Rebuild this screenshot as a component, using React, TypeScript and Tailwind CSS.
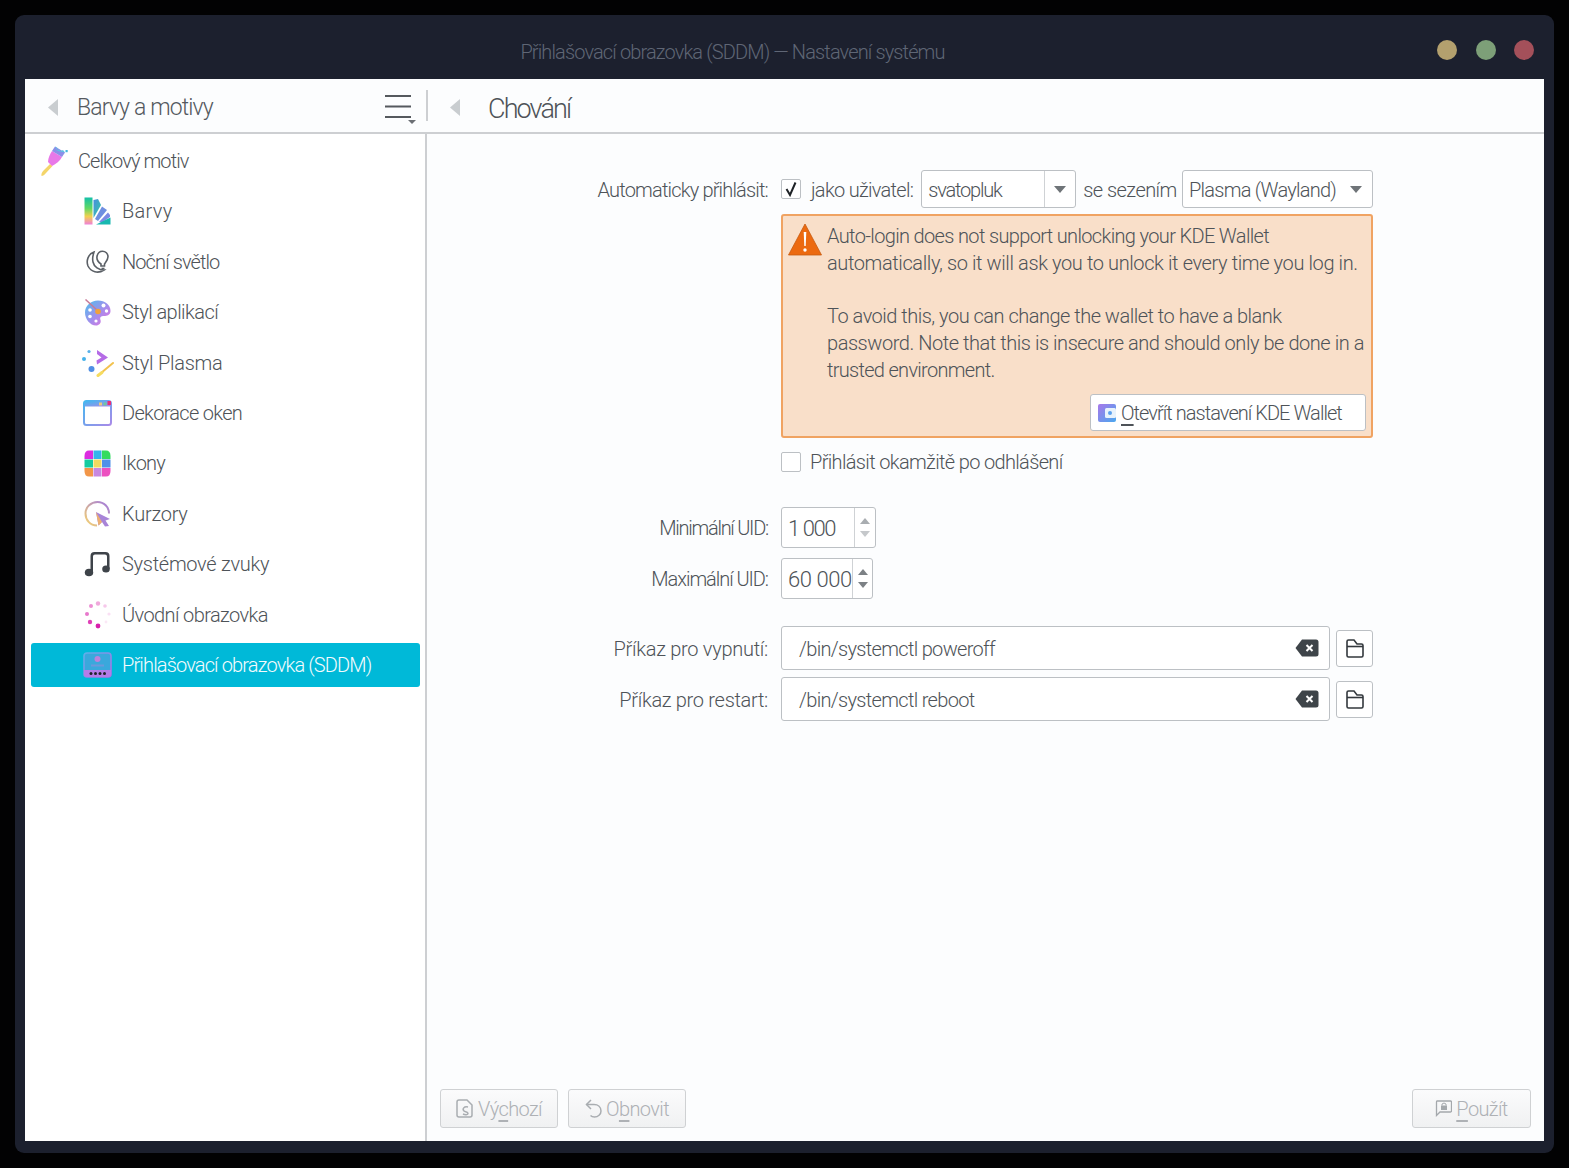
import React from 'react';

const font = "font-['Roboto',sans-serif] font-light";

const BrushIcon = () => (
    <svg width="28" height="32" viewBox="0 0 28 32">
        <path d="M1.5 31 C1 29 2 27 4 25 L10 19 L12.5 21 L6 28 C4.5 30 3 31 1.5 31 Z" fill="#f4d56a" />
        <path d="M8 17 C8 13 10 9 12 6 L22 12 C20 16 16 19 12 21 Z" fill="#e878e8" />
        <path d="M12 6 L15 1.5 L25 7.5 L22 12 Z" fill="#8c8fe8" />
        <path d="M15 1.5 L17.5 3 L16 5.5 L19 4.5 L21 6 L23 5 L25 7.5 L18 6 Z" fill="#5cc4e4" />
        <rect x="25.5" y="5" width="2.2" height="2.2" fill="#45b8de" />
    </svg>
);

const FanIcon = () => (
    <svg width="27" height="28" viewBox="0 0 27 28">
        <defs>
            <linearGradient id="fanA" x1="0" y1="0" x2="0" y2="1">
                <stop offset="0" stopColor="#14c0a8" />
                <stop offset="0.4" stopColor="#62d864" />
                <stop offset="0.7" stopColor="#f2d050" />
                <stop offset="1" stopColor="#f080d8" />
            </linearGradient>
            <linearGradient id="fanB" x1="0" y1="0" x2="1" y2="1">
                <stop offset="0" stopColor="#4a8ce0" />
                <stop offset="1" stopColor="#30d0a0" />
            </linearGradient>
        </defs>
        <rect x="0.5" y="0.5" width="8" height="27" fill="url(#fanA)" />
        <path d="M9.5 3 L14 2 L17 8 L9.5 21 Z" fill="url(#fanB)" />
        <path d="M11 22 L18 9.5 L23 13 L14 24 Z" fill="#6f8fe0" />
        <path d="M15 25 L24 15.5 L26 18 L26 20 L18 25.5 Z" fill="#7c8ae4" />
        <path d="M12 27.5 L26.5 20.5 V27.5 Z" fill="#18b8b0" />
    </svg>
);

const NightIcon = () => (
    <svg width="26" height="26" viewBox="0 0 26 26" fill="none" stroke="#5b6066" strokeWidth="1.6">
        <path d="M9 3 C3 5 1 12 3 17 C6 23 13 25 19 21 C14 21 9 18 8 13 C7 9 8 6 9 3 Z" />
        <path d="M16 17 V15 C13 13 11.5 10.5 12 7.5 C12.6 4 15 2.2 17.5 2.2 C20.5 2.2 23 4.6 23 7.8 C23 10.8 21 13 19.5 15 V17 Z" />
        <path d="M16.5 19.5 H19.5" />
    </svg>
);

const PaletteIcon = () => (
    <svg width="27" height="27" viewBox="0 0 27 27">
        <defs>
            <linearGradient id="palA" x1="0" y1="0" x2="1" y2="1">
                <stop offset="0" stopColor="#4cc0ee" />
                <stop offset="0.55" stopColor="#a68cec" />
                <stop offset="1" stopColor="#ee70dc" />
            </linearGradient>
        </defs>
        <path d="M14 1.5 C21 1.5 26.5 6 26.5 12 C26.5 16 23 17 20 17 C17 17 15.5 18 16.5 21 C17.5 24 15 26.5 12 26.5 C6 26.5 1 20 1 13.5 C1 6.5 7 1.5 14 1.5 Z" fill="url(#palA)" />
        <circle cx="19.5" cy="6.5" r="2" fill="#fff" />
        <circle cx="22.5" cy="12" r="1.7" fill="#fff" />
        <circle cx="6" cy="11" r="1.8" fill="#fff" />
        <circle cx="6" cy="17.5" r="1.8" fill="#fff" />
        <circle cx="12" cy="22" r="1.6" fill="#fff" />
        <path d="M1.5 0.5 L14 12" stroke="#c87a98" strokeWidth="1.5" />
        <circle cx="14" cy="12.5" r="2.8" fill="#f0a23c" />
    </svg>
);

const PlasmaIcon = () => (
    <svg width="32" height="28" viewBox="0 0 32 28">
        <path d="M15 1 L26 8.5 L15 15.5 L14.5 11.5 L19.5 8.5 L15 5 Z" fill="#b56ce6" />
        <circle cx="7" cy="2.5" r="1.6" fill="#58b0e8" />
        <circle cx="2" cy="10" r="2" fill="#45b2ea" />
        <circle cx="9.5" cy="20" r="3" fill="#4f8fe4" />
        <path d="M19 24 L31 14" stroke="#f2c24e" strokeWidth="2" strokeLinecap="round" />
        <path d="M16 26.5 L20 23.5" stroke="#f6dc60" strokeWidth="3" strokeLinecap="round" />
    </svg>
);

const WindowIcon = () => (
    <svg width="29" height="26" viewBox="0 0 29 26" fill="none">
        <defs>
            <linearGradient id="winA" x1="0" y1="0" x2="1" y2="1">
                <stop offset="0" stopColor="#44b8f0" />
                <stop offset="1" stopColor="#a88ae8" />
            </linearGradient>
        </defs>
        <rect x="1" y="1" width="27" height="24" rx="2.5" stroke="url(#winA)" strokeWidth="2" fill="#fff" />
        <path d="M1.5 1.5 H27.5 V6.5 H1.5 Z" fill="url(#winA)" />
        <rect x="16" y="2.5" width="3" height="3" fill="#eec880" />
        <rect x="20.5" y="2.5" width="3" height="3" fill="#70c8a0" />
        <rect x="24.5" y="1" width="3.5" height="4" fill="#e8307a" />
    </svg>
);

const GridIcon = () => (
    <svg width="27" height="27" viewBox="0 0 27 27">
        <path d="M9 0.5 H5 Q0.5 0.5 0.5 6 V9 H9 Z" fill="#dc2ce0" />
        <rect x="9.5" y="0.5" width="8" height="8.5" fill="#35b4ec" />
        <path d="M18 0.5 H22 Q26.5 0.5 26.5 6 V9 H18 Z" fill="#34dc60" />
        <rect x="0.5" y="9.5" width="8.5" height="8" fill="#14cca0" />
        <rect x="9.5" y="9.5" width="8" height="8" fill="#f0da60" />
        <rect x="18" y="9.5" width="8.5" height="8" fill="#4f90e8" />
        <path d="M0.5 18 H9 V26.5 H5 Q0.5 26.5 0.5 21 Z" fill="#f29648" />
        <rect x="9.5" y="18" width="8" height="8.5" fill="#c888e0" />
        <path d="M18 18 H26.5 V21 Q26.5 26.5 22 26.5 H18 Z" fill="#ec50c0" />
    </svg>
);

const CursorIcon = () => (
    <svg width="27" height="27" viewBox="0 0 27 27" fill="none">
        <defs>
            <linearGradient id="curA" x1="0" y1="1" x2="1" y2="0">
                <stop offset="0" stopColor="#f6d470" />
                <stop offset="1" stopColor="#a078e0" />
            </linearGradient>
        </defs>
        <path d="M13 25.5 C6 25.5 1.5 20 1.5 13.5 C1.5 7 7 2 13.5 2 C20 2 25 7 25 13.5" stroke="url(#curA)" strokeWidth="2" />
        <path d="M12 12 L26 19 L21.5 20.5 L25 26 L21 26.5 L18 22 L14.5 25.5 Z" fill="#a884d8" />
        <path d="M12 12 L18 22 L14.5 25.5 Z" fill="#eeb070" />
    </svg>
);

const MusicIcon = () => (
    <svg width="27" height="26" viewBox="0 0 27 26" fill="#3e4349">
        <path d="M6.5 21 V5 Q6.5 1 10.5 1 H21.5 Q25.5 1 25.5 5 V18 H23 V5.5 Q23 3.5 21 3.5 H11 Q9 3.5 9 5.5 V21 Z" />
        <ellipse cx="5" cy="21.5" rx="4.2" ry="3.8" />
        <ellipse cx="22" cy="18" rx="3.8" ry="3.5" />
    </svg>
);

const SplashIcon = () => (
    <svg width="28" height="28" viewBox="0 0 28 28">
        <circle cx="14" cy="2.5" r="2.2" fill="#f0a8dc" />
        <circle cx="7" cy="5" r="2" fill="#ec90d4" />
        <circle cx="21" cy="5" r="1.8" fill="#f6c8ea" />
        <circle cx="3" cy="13" r="2" fill="#e878cc" />
        <circle cx="25" cy="13" r="1.6" fill="#fae0f4" />
        <circle cx="6" cy="21" r="2.2" fill="#e040b8" />
        <circle cx="22" cy="21" r="1.4" fill="#fbe8f6" />
        <circle cx="14" cy="25" r="2.4" fill="#d820ac" />
    </svg>
);

const LoginIcon = () => (
    <svg width="29" height="26" viewBox="0 0 29 26">
        <defs>
            <linearGradient id="logA" x1="0" y1="0" x2="1" y2="1">
                <stop offset="0" stopColor="#5eb0ea" />
                <stop offset="1" stopColor="#b06ce6" />
            </linearGradient>
        </defs>
        <rect x="1" y="1" width="27" height="24" rx="3" fill="#3aa8dc" stroke="url(#logA)" strokeWidth="1.6" />
        <path d="M1 18 H28 V22 Q28 25 25 25 H4 Q1 25 1 22 Z" fill="#b47ce8" />
        <circle cx="14.5" cy="7" r="3" fill="#bc82dc" />
        <path d="M8 12.5 H21 V14.5 H8 Z" fill="#6c98dc" />
        <circle cx="8" cy="21.5" r="1.5" fill="#20232b" />
        <circle cx="12.5" cy="21.5" r="1.5" fill="#20232b" />
        <circle cx="17" cy="21.5" r="1.5" fill="#20232b" />
        <circle cx="21.5" cy="21.5" r="1.5" fill="#20232b" />
    </svg>
);

const BackArrow = () => (
    <svg width="10" height="17" viewBox="0 0 10 17">
        <path d="M10 0 V17 L0 8.5 Z" fill="#c9cdd0" />
    </svg>
);

const MenuIcon = () => (
    <svg width="32" height="30" viewBox="0 0 32 30">
        <path d="M0 1 H26 M0 11.5 H26 M0 22 H26" stroke="#55595e" strokeWidth="2" />
        <path d="M23 25 H31 L27 29 Z" fill="#6b6f74" />
    </svg>
);

const Caret = () => (
    <svg width="12" height="7" viewBox="0 0 12 7" className="shrink-0">
        <path d="M0 0 H12 L6 7 Z" fill="#6f7478" />
    </svg>
);

const ClearIcon = () => (
    <svg width="24" height="18" viewBox="0 0 24 18">
        <path d="M7 0.5 H21 Q23.5 0.5 23.5 3 V15 Q23.5 17.5 21 17.5 H7 L0.5 9 Z" fill="#3e4449" />
        <path d="M11.5 6 L17.5 12 M17.5 6 L11.5 12" stroke="#fff" strokeWidth="2" />
    </svg>
);

const FolderIcon = () => (
    <svg width="18" height="19" viewBox="0 0 18 19" fill="none" stroke="#33383d" strokeWidth="1.6">
        <path d="M2.5 18 H15.5 Q17 18 17 16.5 V6.5 Q17 5 15.5 5 H11 L8 1 H2.5 Q1 1 1 2.5 V16.5 Q1 18 2.5 18 Z" />
        <path d="M1 7.5 H17" />
    </svg>
);

const WarningIcon = () => (
    <svg width="34" height="33" viewBox="0 0 34 33">
        <path d="M17 1 L33.5 32 H0.5 Z" fill="#ec6a10" stroke="#c85a10" strokeWidth="0.8" strokeLinejoin="round" />
        <path d="M15.7 9 H18.3 L17.7 23 H16.3 Z" fill="#fff" />
        <circle cx="17" cy="27" r="1.7" fill="#fff" />
    </svg>
);

const WalletIcon = () => (
    <svg width="19" height="18" viewBox="0 0 19 18">
        <defs>
            <linearGradient id="walA" x1="0" y1="0" x2="1" y2="1">
                <stop offset="0" stopColor="#a878ea" />
                <stop offset="1" stopColor="#4aa8ee" />
            </linearGradient>
        </defs>
        <rect x="0" y="0" width="18" height="18" rx="2" fill="url(#walA)" />
        <rect x="7" y="4" width="11" height="10" rx="1.5" fill="#e8f2fc" />
        <circle cx="12" cy="9" r="2" fill="#5aa0ec" />
    </svg>
);

const DefaultsIcon = () => (
    <svg width="18" height="19" viewBox="0 0 18 19" fill="none" stroke="#a9adb1" strokeWidth="1.5">
        <path d="M3 1 H11 L16 6 V16 Q16 18 14 18 H3 Q1 18 1 16 V3 Q1 1 3 1 Z" />
        <path d="M12 8 C8 7 6 10 8 12 C9 13 12 12.5 12 14.5 C12 16 9 16 7 15" />
    </svg>
);

const UndoIcon = () => (
    <svg width="17" height="19" viewBox="0 0 17 19" fill="none" stroke="#a9adb1" strokeWidth="1.5">
        <path d="M6 1 L1.5 5.5 L6 10" />
        <path d="M1.5 5.5 H9 C13 5.5 16 8 16 12 C16 15.5 13 18 9.5 18 C8 18 6.5 17.5 5.5 16.5" />
    </svg>
);

const ApplyIcon = () => (
    <svg width="17" height="17" viewBox="0 0 17 17">
        <path d="M2 1 H15.5 Q16.5 1 16.5 2 V11 Q16.5 12 15.5 12 H5 L1.5 15.5 V2 Q1.5 1 2 1 Z" fill="none" stroke="#a4a8ac" strokeWidth="1.3" />
        <rect x="6" y="5.5" width="6" height="4.5" fill="#a4a8ac" />
        <path d="M7 5.5 V4 Q9 2 11 4 V5.5" fill="none" stroke="#a4a8ac" strokeWidth="1" />
    </svg>
);

const sidebarItems = [
    { label: 'Barvy', icon: <FanIcon />, tracking: 'tracking-[0.3px]' },
    { label: 'Noční světlo', icon: <NightIcon />, tracking: 'tracking-[-0.9px]' },
    { label: 'Styl aplikací', icon: <PaletteIcon />, tracking: 'tracking-[-0.55px]' },
    { label: 'Styl Plasma', icon: <PlasmaIcon />, tracking: 'tracking-[-0.25px]' },
    { label: 'Dekorace oken', icon: <WindowIcon />, tracking: 'tracking-[-0.7px]' },
    { label: 'Ikony', icon: <GridIcon />, tracking: 'tracking-[-0.75px]' },
    { label: 'Kurzory', icon: <CursorIcon />, tracking: 'tracking-[-0.25px]' },
    { label: 'Systémové zvuky', icon: <MusicIcon />, tracking: 'tracking-[-0.28px]' },
    { label: 'Úvodní obrazovka', icon: <SplashIcon />, tracking: 'tracking-[-0.6px]' },
];

const textClass = 'text-[20px] text-[#4e5358] leading-none whitespace-nowrap';
const labelClass = `${textClass} flex items-center justify-end pt-[1px]`;

const Spinner = ({ value, width, tracking, dim }: { value: string; width: string; tracking: string; dim?: boolean }) => (
    <div className={`flex h-[41px] ${width} items-stretch rounded-[3px] border border-[#bcc0c4] bg-white`}>
        <div className={`flex flex-1 items-center pl-[6px] pt-[3px] text-[22px] ${tracking} text-[#4e5358] leading-none whitespace-nowrap`}>{value}</div>
        <div className="flex w-[21px] shrink-0 flex-col items-center justify-center gap-[7px] border-l border-[#cfd2d5]">
            <svg width="10" height="6" viewBox="0 0 10 6">
                <path d="M0 6 H10 L5 0 Z" fill={dim ? '#a9adb1' : '#7c8185'} />
            </svg>
            <svg width="10" height="6" viewBox="0 0 10 6">
                <path d="M0 0 H10 L5 6 Z" fill={dim ? '#c5c8cb' : '#7c8185'} />
            </svg>
        </div>
    </div>
);

const CommandField = ({ value }: { value: string }) => (
    <div className="flex items-center gap-[6px]">
        <div className="flex h-[44px] w-[549px] items-center justify-between rounded-[3px] border border-[#bcc0c4] bg-white pl-[17px] pr-[10px]">
            <span className={`${textClass} pt-[1px] tracking-[-0.68px]`}>{value}</span>
            <ClearIcon />
        </div>
        <div className="flex h-[37px] w-[37px] items-center justify-center rounded-[3px] border border-[#bcc0c4] bg-white">
            <FolderIcon />
        </div>
    </div>
);

const FooterButton = ({ icon, before, mnemonic, after, width }: { icon: React.ReactNode; before: string; mnemonic: string; after: string; width: string }) => (
    <div className={`flex h-[39px] ${width} items-center justify-center gap-[4px] rounded-[3px] border border-[#cfd1d3] bg-gradient-to-b from-[#fbfbfc] to-[#f0f1f2]`}>
        {icon}
        <span className="text-[20px] tracking-[-0.6px] text-[#aeb1b5] leading-none whitespace-nowrap">
            {before}
            <span className="underline underline-offset-[4px]">{mnemonic}</span>
            {after}
        </span>
    </div>
);

const App = () => {
    return (
        <div className={`${font} flex h-[1168px] w-[1569px] items-start overflow-hidden bg-[#020203] pl-[15px] pt-[15px]`}>
            <div className="flex h-[1138px] w-[1539px] flex-col rounded-[9px] bg-[#1c202e]">
                {/* Title bar */}
                <div className="flex h-[64px] shrink-0 items-center pt-[9px]">
                    <div className="flex-1 pl-[13px] text-center text-[20px] tracking-[-0.87px] text-[#5f6675] whitespace-nowrap">
                        Přihlašovací obrazovka (SDDM) — Nastavení systému
                    </div>
                    <div className="flex items-center gap-[18.5px] pr-[20px] pb-[3px]">
                        <div className="h-[20px] w-[20px] rounded-full bg-[#b3a06e]" />
                        <div className="h-[20px] w-[20px] rounded-full bg-[#7d9f78]" />
                        <div className="h-[20px] w-[20px] rounded-full bg-[#a4505a]" />
                    </div>
                </div>

                {/* Client area */}
                <div className="mx-[10px] flex h-[1062px] flex-col bg-[#fcfdfe]">
                    <div className="flex h-[55px] shrink-0 border-b-2 border-[#cdcfd2]">
                        <div className="flex w-[402px] items-center pl-[23px]">
                            <div className="pt-[3px]">
                                <BackArrow />
                            </div>
                            <span className="ml-[19px] flex-1 pt-[5px] text-[23px] tracking-[-0.85px] text-[#54595e]">Barvy a motivy</span>
                            <div className="pt-[8px]">
                                <MenuIcon />
                            </div>
                            <div className="ml-[9px] mr-[-1px] h-[31px] w-[2px] bg-[#cdcfd2]" />
                        </div>
                        <div className="flex flex-1 items-center pl-[23px]">
                            <div className="pt-[3px]">
                                <BackArrow />
                            </div>
                            <span className="ml-[28px] pt-[7px] text-[27px] tracking-[-1.9px] text-[#4e5358]">Chování</span>
                        </div>
                    </div>

                    <div className="flex min-h-0 flex-1">
                        {/* Sidebar */}
                        <div className="flex w-[402px] shrink-0 flex-col gap-[6.4px] border-r-2 border-[#cdcfd2] bg-white pl-[6px] pr-[5px] pt-[5px]">
                            <div className="flex h-[44px] items-center pl-[9px]">
                                <div className="flex w-[38px] justify-start">
                                    <BrushIcon />
                                </div>
                                <span className={`${textClass} tracking-[-0.9px]`}>Celkový motiv</span>
                            </div>
                            {sidebarItems.map((item) => (
                                <div key={item.label} className="flex h-[44px] items-center pl-[50px]">
                                    <div className="mr-[8px] flex w-[33px] shrink-0 justify-center">{item.icon}</div>
                                    <span className={`${textClass} ${item.tracking}`}>{item.label}</span>
                                </div>
                            ))}
                            <div className="flex h-[44px] w-[389px] items-center rounded-[3px] bg-[#00b9d8] pl-[50px]">
                                <div className="mr-[8px] flex w-[33px] shrink-0 justify-center">
                                    <LoginIcon />
                                </div>
                                <span className="text-[20px] tracking-[-0.85px] text-[#f4fbfd] leading-none whitespace-nowrap">Přihlašovací obrazovka (SDDM)</span>
                            </div>
                        </div>

                        {/* Settings page */}
                        <div className="flex flex-1 flex-col justify-between">
                            <div className="grid grid-cols-[341px_592px] gap-x-[13px] pt-[36px]">
                                <div className={`${labelClass} h-[38px] tracking-[-0.82px]`}>Automaticky přihlásit:</div>
                                <div className="flex h-[38px] items-center">
                                    <div className="flex h-[20px] w-[20px] items-center justify-center rounded-[2px] border border-[#bcc0c4] bg-white">
                                        <svg width="14" height="16" viewBox="0 0 14 16" fill="none" stroke="#1e2226" strokeWidth="2">
                                            <path d="M2.5 8 L6 14 L11.5 1.5" />
                                        </svg>
                                    </div>
                                    <span className={`${textClass} ml-[10px] pt-[1px] tracking-[-0.7px]`}>jako uživatel:</span>
                                    <div className="ml-[8px] flex h-[38px] w-[155px] items-center rounded-[3px] border border-[#bcc0c4] bg-white">
                                        <span className={`${textClass} flex-1 pl-[6px] pt-[1px] tracking-[-1.2px]`}>svatopluk</span>
                                        <div className="flex h-full w-[31px] items-center justify-center border-l border-[#cfd2d5]">
                                            <Caret />
                                        </div>
                                    </div>
                                    <span className={`${textClass} ml-[7px] pt-[1px] tracking-[-0.55px]`}>se sezením</span>
                                    <div className="ml-auto flex h-[38px] w-[191px] items-center justify-between rounded-[3px] border border-[#bcc0c4] bg-white pl-[6px] pr-[10px]">
                                        <span className={`${textClass} pt-[1px] tracking-[-0.75px]`}>Plasma (Wayland)</span>
                                        <Caret />
                                    </div>
                                </div>

                                <div />
                                <div className="mt-[6px] flex h-[224px] flex-col rounded-[3px] border-2 border-[#f0a362] bg-[#f9dfc9] px-[5px]">
                                    <div className="flex flex-1 pt-[7px]">
                                        <div className="w-[39px] shrink-0">
                                            <WarningIcon />
                                        </div>
                                        <div className="text-[20px] leading-[26.7px] text-[#4e5358] whitespace-nowrap">
                                            <div className="tracking-[-0.65px]">Auto-login does not support unlocking your KDE Wallet</div>
                                            <div className="tracking-[-0.39px]">automatically, so it will ask you to unlock it every time you log in.</div>
                                            <div className="mt-[26.7px] tracking-[-0.5px]">To avoid this, you can change the wallet to have a blank</div>
                                            <div className="tracking-[-0.45px]">password. Note that this is insecure and should only be done in a</div>
                                            <div className="tracking-[-0.7px]">trusted environment.</div>
                                        </div>
                                    </div>
                                    <div className="mb-[5px] flex justify-end">
                                        <div className="flex h-[37px] w-[276px] items-center gap-[4px] rounded-[3px] border border-[#bcc0c4] bg-white pl-[7px]">
                                            <WalletIcon />
                                            <span className={`${textClass} tracking-[-0.95px]`}>
                                                <span className="underline underline-offset-[4px]">O</span>tevřít nastavení KDE Wallet
                                            </span>
                                        </div>
                                    </div>
                                </div>

                                <div />
                                <div className="mt-[12px] flex h-[24px] items-center gap-[9px]">
                                    <div className="h-[20px] w-[20px] rounded-[2px] border border-[#bcc0c4] bg-white" />
                                    <span className={`${textClass} tracking-[-0.65px]`}>Přihlásit okamžitě po odhlášení</span>
                                </div>

                                <div className={`${labelClass} mt-[33px] h-[41px] tracking-[-1.25px]`}>Minimální UID:</div>
                                <div className="mt-[33px]">
                                    <Spinner value="1 000" width="w-[95px]" tracking="tracking-[-1.4px]" dim />
                                </div>

                                <div className={`${labelClass} mt-[10px] h-[41px] tracking-[-1.05px]`}>Maximální UID:</div>
                                <div className="mt-[10px]">
                                    <Spinner value="60 000" width="w-[92px]" tracking="tracking-[-0.45px]" />
                                </div>

                                <div className={`${labelClass} mt-[27px] h-[44px] tracking-[-0.27px]`}>Příkaz pro vypnutí:</div>
                                <div className="mt-[27px]">
                                    <CommandField value="/bin/systemctl poweroff" />
                                </div>

                                <div className={`${labelClass} mt-[7px] h-[44px] tracking-[-0.3px]`}>Příkaz pro restart:</div>
                                <div className="mt-[7px]">
                                    <CommandField value="/bin/systemctl reboot" />
                                </div>
                            </div>

                            {/* Footer buttons */}
                            <div className="flex items-center pb-[13px] pl-[13px] pr-[13px]">
                                <div className="flex gap-[10px]">
                                    <FooterButton icon={<DefaultsIcon />} before="Vý" mnemonic="c" after="hozí" width="w-[118px]" />
                                    <FooterButton icon={<UndoIcon />} before="O" mnemonic="b" after="novit" width="w-[118px]" />
                                </div>
                                <div className="ml-auto">
                                    <FooterButton icon={<ApplyIcon />} before="" mnemonic="P" after="oužít" width="w-[119px]" />
                                </div>
                            </div>
                        </div>
                    </div>
                </div>
            </div>
        </div>
    );
};

export default App;
